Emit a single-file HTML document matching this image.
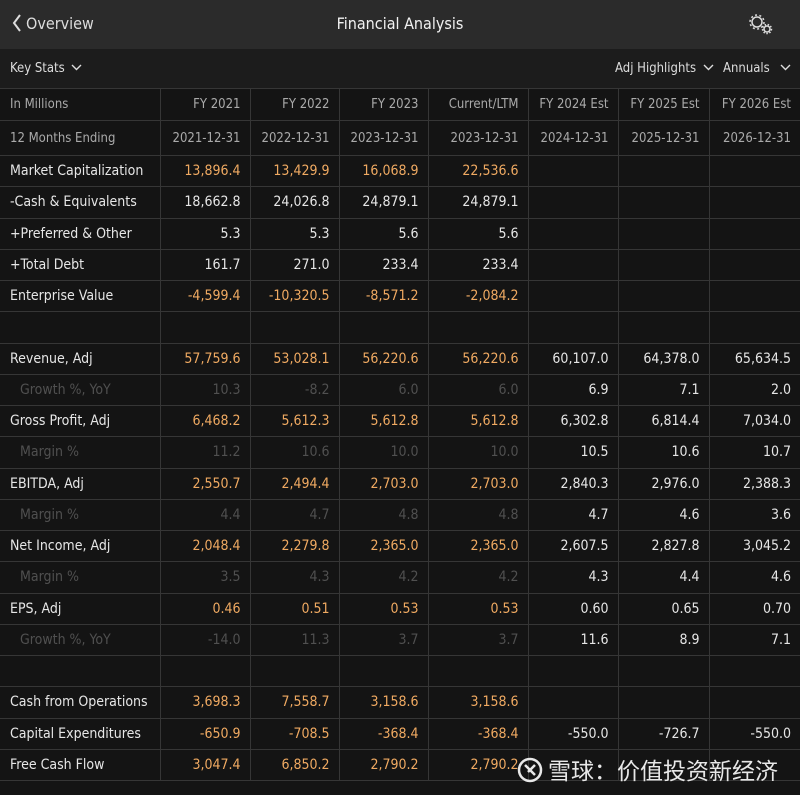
<!DOCTYPE html>
<html><head><meta charset="utf-8"><style>
*{margin:0;padding:0;box-sizing:border-box}
body{width:800px;height:795px;background:#141414;font-family:"DejaVu Sans Condensed","Liberation Sans",sans-serif;color:#e6e6e6;overflow:hidden;position:relative}
.hdr{position:absolute;left:0;top:0;width:800px;height:49px;background:#2b2b2b}
.hdr .back{position:absolute;left:12px;top:14px;font-size:16px;color:#ddd}
.hdr .title{position:absolute;left:0;width:800px;top:14px;text-align:center;font-size:16px;color:#f2f2f2}
.bar{position:absolute;left:0;top:49px;width:800px;height:39px;background:#1c1c1c;font-size:13px;color:#ddd}
table{position:absolute;left:0;top:88px;border-collapse:collapse;table-layout:fixed;width:800px;font-size:14px}
td{border:1px solid #363636;text-align:right;padding-right:9px;white-space:nowrap;overflow:hidden;height:31.25px}
td:first-child{text-align:left;padding-left:10px;border-left:none}
td:last-child{border-right:none}
tr.h td{color:#aaa;font-size:13px}
.o{color:#f0aa62}.d td{color:#505050}.d td:first-child{padding-left:20px}
</style></head><body>
<div class="hdr"><div class="back"><svg width="10" height="18" style="vertical-align:-3px;margin-right:4px"><path d="M8 1 L2 9 L8 17" stroke="#ddd" stroke-width="2" fill="none"/></svg>Overview</div><div class="title">Financial Analysis</div>
<svg style="position:absolute;left:748px;top:13px" width="26" height="22" fill="none" stroke="#ddd" stroke-width="1.5"><circle cx="9" cy="9" r="5"/><circle cx="9" cy="9" r="7" stroke-dasharray="2 2.4"/><circle cx="19" cy="16" r="3"/><circle cx="19" cy="16" r="4.5" stroke-dasharray="1.5 1.6"/></svg></div>
<div class="bar"><span style="position:absolute;left:10px;top:12px">Key Stats</span><svg style="position:absolute;left:71px;top:15px" width="11" height="7"><path d="M1 1L5.5 5.5L10 1" stroke="#ddd" stroke-width="1.4" fill="none"/></svg>
<span style="position:absolute;left:615px;top:12px">Adj Highlights</span><svg style="position:absolute;left:703px;top:15px" width="11" height="7"><path d="M1 1L5.5 5.5L10 1" stroke="#ddd" stroke-width="1.4" fill="none"/></svg>
<span style="position:absolute;left:723px;top:12px">Annuals</span><svg style="position:absolute;left:780px;top:15px" width="11" height="7"><path d="M1 1L5.5 5.5L10 1" stroke="#ddd" stroke-width="1.4" fill="none"/></svg></div>
<table>
<colgroup><col style="width:160px"><col style="width:90px"><col style="width:89px"><col style="width:89px"><col style="width:100px"><col style="width:90px"><col style="width:91px"><col style="width:91px"></colgroup>
<tr class="h"><td style="height:32px">In Millions</td><td>FY 2021</td><td>FY 2022</td><td>FY 2023</td><td>Current/LTM</td><td>FY 2024 Est</td><td>FY 2025 Est</td><td>FY 2026 Est</td></tr>
<tr class="h"><td style="height:35px">12 Months Ending</td><td>2021-12-31</td><td>2022-12-31</td><td>2023-12-31</td><td>2023-12-31</td><td>2024-12-31</td><td>2025-12-31</td><td>2026-12-31</td></tr>
<tr><td>Market Capitalization</td><td class="o">13,896.4</td><td class="o">13,429.9</td><td class="o">16,068.9</td><td class="o">22,536.6</td><td></td><td></td><td></td></tr>
<tr><td>-Cash &amp; Equivalents</td><td>18,662.8</td><td>24,026.8</td><td>24,879.1</td><td>24,879.1</td><td></td><td></td><td></td></tr>
<tr><td>+Preferred &amp; Other</td><td>5.3</td><td>5.3</td><td>5.6</td><td>5.6</td><td></td><td></td><td></td></tr>
<tr><td>+Total Debt</td><td>161.7</td><td>271.0</td><td>233.4</td><td>233.4</td><td></td><td></td><td></td></tr>
<tr><td>Enterprise Value</td><td class="o">-4,599.4</td><td class="o">-10,320.5</td><td class="o">-8,571.2</td><td class="o">-2,084.2</td><td></td><td></td><td></td></tr>
<tr><td></td><td></td><td></td><td></td><td></td><td></td><td></td><td></td></tr>
<tr><td>Revenue, Adj</td><td class="o">57,759.6</td><td class="o">53,028.1</td><td class="o">56,220.6</td><td class="o">56,220.6</td><td>60,107.0</td><td>64,378.0</td><td>65,634.5</td></tr>
<tr class="d"><td>Growth %, YoY</td><td>10.3</td><td>-8.2</td><td>6.0</td><td>6.0</td><td style="color:#e6e6e6">6.9</td><td style="color:#e6e6e6">7.1</td><td style="color:#e6e6e6">2.0</td></tr>
<tr><td>Gross Profit, Adj</td><td class="o">6,468.2</td><td class="o">5,612.3</td><td class="o">5,612.8</td><td class="o">5,612.8</td><td>6,302.8</td><td>6,814.4</td><td>7,034.0</td></tr>
<tr class="d"><td>Margin %</td><td>11.2</td><td>10.6</td><td>10.0</td><td>10.0</td><td style="color:#e6e6e6">10.5</td><td style="color:#e6e6e6">10.6</td><td style="color:#e6e6e6">10.7</td></tr>
<tr><td>EBITDA, Adj</td><td class="o">2,550.7</td><td class="o">2,494.4</td><td class="o">2,703.0</td><td class="o">2,703.0</td><td>2,840.3</td><td>2,976.0</td><td>2,388.3</td></tr>
<tr class="d"><td>Margin %</td><td>4.4</td><td>4.7</td><td>4.8</td><td>4.8</td><td style="color:#e6e6e6">4.7</td><td style="color:#e6e6e6">4.6</td><td style="color:#e6e6e6">3.6</td></tr>
<tr><td>Net Income, Adj</td><td class="o">2,048.4</td><td class="o">2,279.8</td><td class="o">2,365.0</td><td class="o">2,365.0</td><td>2,607.5</td><td>2,827.8</td><td>3,045.2</td></tr>
<tr class="d"><td>Margin %</td><td>3.5</td><td>4.3</td><td>4.2</td><td>4.2</td><td style="color:#e6e6e6">4.3</td><td style="color:#e6e6e6">4.4</td><td style="color:#e6e6e6">4.6</td></tr>
<tr><td>EPS, Adj</td><td class="o">0.46</td><td class="o">0.51</td><td class="o">0.53</td><td class="o">0.53</td><td>0.60</td><td>0.65</td><td>0.70</td></tr>
<tr class="d"><td>Growth %, YoY</td><td>-14.0</td><td>11.3</td><td>3.7</td><td>3.7</td><td style="color:#e6e6e6">11.6</td><td style="color:#e6e6e6">8.9</td><td style="color:#e6e6e6">7.1</td></tr>
<tr><td></td><td></td><td></td><td></td><td></td><td></td><td></td><td></td></tr>
<tr><td>Cash from Operations</td><td class="o">3,698.3</td><td class="o">7,558.7</td><td class="o">3,158.6</td><td class="o">3,158.6</td><td></td><td></td><td></td></tr>
<tr><td>Capital Expenditures</td><td class="o">-650.9</td><td class="o">-708.5</td><td class="o">-368.4</td><td class="o">-368.4</td><td>-550.0</td><td>-726.7</td><td>-550.0</td></tr>
<tr><td>Free Cash Flow</td><td class="o">3,047.4</td><td class="o">6,850.2</td><td class="o">2,790.2</td><td class="o">2,790.2</td><td></td><td></td><td></td></tr>
</table>
<div style="position:absolute;left:516px;top:752px;font-family:'Liberation Sans','Noto Sans CJK SC',sans-serif;font-size:23px;color:#e8e8e8;white-space:nowrap"><svg width="28" height="28" style="vertical-align:-5px;margin-right:4px" fill="none" stroke="#e8e8e8" stroke-width="2.5"><circle cx="14" cy="14" r="11"/><path d="M9 9L19 19M19 9L12 16"/></svg>雪球：价值投资新经济</div>
</body></html>
